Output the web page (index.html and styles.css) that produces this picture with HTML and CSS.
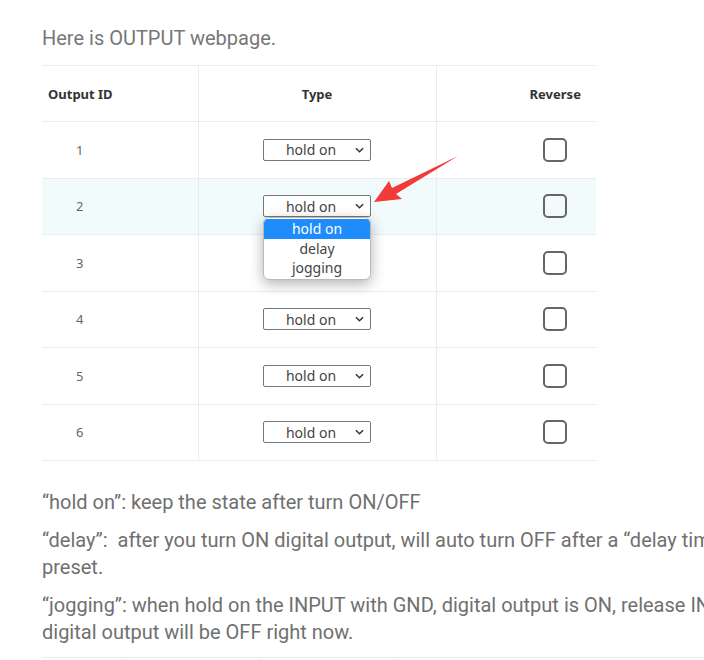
FILE: index.html
```html
<!DOCTYPE html>
<html>
<head>
<meta charset="utf-8">
<link rel="stylesheet" href="styles.css">
</head>
<body>
<div class="page">
  <p class="title">Here is OUTPUT webpage.</p>
  <div class="table-wrap">
    <table class="out-table">
      <colgroup><col class="w-id"><col class="w-type"><col class="w-rev"></colgroup>
      <thead>
        <tr><th class="c-id">Output ID</th><th class="c-type">Type</th><th class="c-rev">Reverse</th></tr>
      </thead>
      <tbody>
        <tr><td class="c-id">1</td><td class="c-type"><div class="sel"><span>hold on</span><svg class="chev" viewBox="0 0 10 6" width="9" height="6"><path d="M1 1 L5 5 L9 1" fill="none" stroke="#333" stroke-width="1.6"/></svg></div></td><td class="c-rev"><span class="cb"></span></td></tr>
        <tr class="hl"><td class="c-id">2</td><td class="c-type"><div class="sel"><span>hold on</span><svg class="chev" viewBox="0 0 10 6" width="9" height="6"><path d="M1 1 L5 5 L9 1" fill="none" stroke="#333" stroke-width="1.6"/></svg></div></td><td class="c-rev"><span class="cb"></span></td></tr>
        <tr><td class="c-id">3</td><td class="c-type"><div class="sel"><span>hold on</span><svg class="chev" viewBox="0 0 10 6" width="9" height="6"><path d="M1 1 L5 5 L9 1" fill="none" stroke="#333" stroke-width="1.6"/></svg></div></td><td class="c-rev"><span class="cb"></span></td></tr>
        <tr><td class="c-id">4</td><td class="c-type"><div class="sel"><span>hold on</span><svg class="chev" viewBox="0 0 10 6" width="9" height="6"><path d="M1 1 L5 5 L9 1" fill="none" stroke="#333" stroke-width="1.6"/></svg></div></td><td class="c-rev"><span class="cb"></span></td></tr>
        <tr><td class="c-id">5</td><td class="c-type"><div class="sel"><span>hold on</span><svg class="chev" viewBox="0 0 10 6" width="9" height="6"><path d="M1 1 L5 5 L9 1" fill="none" stroke="#333" stroke-width="1.6"/></svg></div></td><td class="c-rev"><span class="cb"></span></td></tr>
        <tr><td class="c-id">6</td><td class="c-type"><div class="sel"><span>hold on</span><svg class="chev" viewBox="0 0 10 6" width="9" height="6"><path d="M1 1 L5 5 L9 1" fill="none" stroke="#333" stroke-width="1.6"/></svg></div></td><td class="c-rev"><span class="cb"></span></td></tr>
      </tbody>
    </table>
    <ul class="dropdown">
      <li class="opt active">hold on</li>
      <li class="opt">delay</li>
      <li class="opt">jogging</li>
    </ul>
    <svg class="arrow" width="100" height="60" viewBox="370 150 100 60">
      <polygon points="374,202 389,181 392,188 458,156 396,194 402,199" fill="#f23a3a"/>
    </svg>
  </div>
  <div class="notes">
    <p>“hold on”: keep the state after turn ON/OFF</p>
    <p>“delay”:&nbsp; after you turn ON digital output, will auto turn OFF after a “delay time” which you preset.</p>
    <p>“jogging”: when hold on the INPUT with GND, digital output is ON, release INPUT, the digital output will be OFF right now.</p>
  </div>
  <div class="next-table">
    <div class="nt-cell w1"></div><div class="nt-cell w2"></div><div class="nt-cell w3"></div><div class="nt-cell w4"></div>
  </div>
</div>
</body>
</html>
```
FILE: styles.css
```css
html, body {
  margin: 0;
  padding: 0;
  background: #fff;
  overflow: hidden;
}
.page {
  width: 820px;
  padding-left: 42px;
  font-family: Roboto, "Liberation Sans", sans-serif;
  color: #666;
}
.title {
  margin: 0;
  padding-top: 25px;
  height: 40px;
  font-size: 20px;
  line-height: 26px;
  color: #777;
}
.table-wrap {
  position: relative;
  width: 554px;
}
.out-table {
  border-collapse: collapse;
  table-layout: fixed;
  width: 554px;
  font-family: "Noto Sans", "Open Sans", sans-serif;
  font-size: 13px;
  color: #555;
}
.w-id { width: 156px; }
.w-type { width: 238px; }
.w-rev { width: 160px; }
.out-table th, .out-table td {
  border-top: 1px solid #ececec;
  border-bottom: 1px solid #ececec;
  padding: 0;
}
.out-table th + th, .out-table td + td {
  border-left: 1px solid #ececec;
}
.out-table th {
  height: 55px;
  font-weight: 700;
  color: #333;
}
.out-table td {
  height: 55.5px;
}
.c-type { text-align: center; }
.c-rev { text-align: center; }
.out-table .c-rev { padding-left: 78px; }
.out-table th.c-id { text-align: left; padding-left: 6px; }
.out-table td.c-id { text-align: left; padding-left: 34px; color: #666; }
tr.hl td { background: #f2fbfc; }
.sel {
  display: inline-flex;
  align-items: center;
  justify-content: center;
  position: relative;
  box-sizing: border-box;
  width: 108px;
  height: 22px;
  border: 1px solid #777;
  border-radius: 2px;
  background: #fff;
  font-family: "Noto Sans", "Open Sans", sans-serif;
  font-size: 14px;
  color: #444;
  vertical-align: middle;
  padding-right: 12px;
}
.chev {
  position: absolute;
  right: 6px;
  top: 7px;
}
.cb {
  display: inline-block;
  box-sizing: border-box;
  width: 24px;
  height: 24px;
  border: 2px solid #666;
  border-radius: 5px;
  vertical-align: middle;
}
.dropdown {
  position: absolute;
  left: 221px;
  top: 152px;
  width: 108px;
  box-sizing: border-box;
  margin: 0;
  padding: 1px 0;
  list-style: none;
  background: #fff;
  border: 1px solid #bbb;
  border-radius: 6px;
  box-shadow: 0 4px 14px rgba(0,0,0,0.3);
  font-family: "Noto Sans", "Open Sans", sans-serif;
  font-size: 14px;
  color: #444;
  overflow: hidden;
}
.opt {
  height: 19.5px;
  line-height: 19px;
  text-align: center;
}
.opt.active {
  background: #1e8cfa;
  color: #fff;
  border-radius: 4px 4px 0 0;
}
.arrow {
  position: absolute;
  left: 328px;
  top: 85px;
}
.notes {
  padding-top: 28px;
  width: 788px;
  font-size: 20px;
  line-height: 27px;
  color: #707070;
}
.notes p {
  margin: 0 0 11px 0;
}
.next-table {
  display: flex;
  border-top: 1px solid #eee;
  height: 20px;
}
.nt-cell { height: 20px; }
.nt-cell + .nt-cell { border-left: 1px solid #eee; }
.w1 { width: 83px; }
.w2 { width: 133px; }
.w3 { width: 134px; }
.w4 { width: 300px; }
```
